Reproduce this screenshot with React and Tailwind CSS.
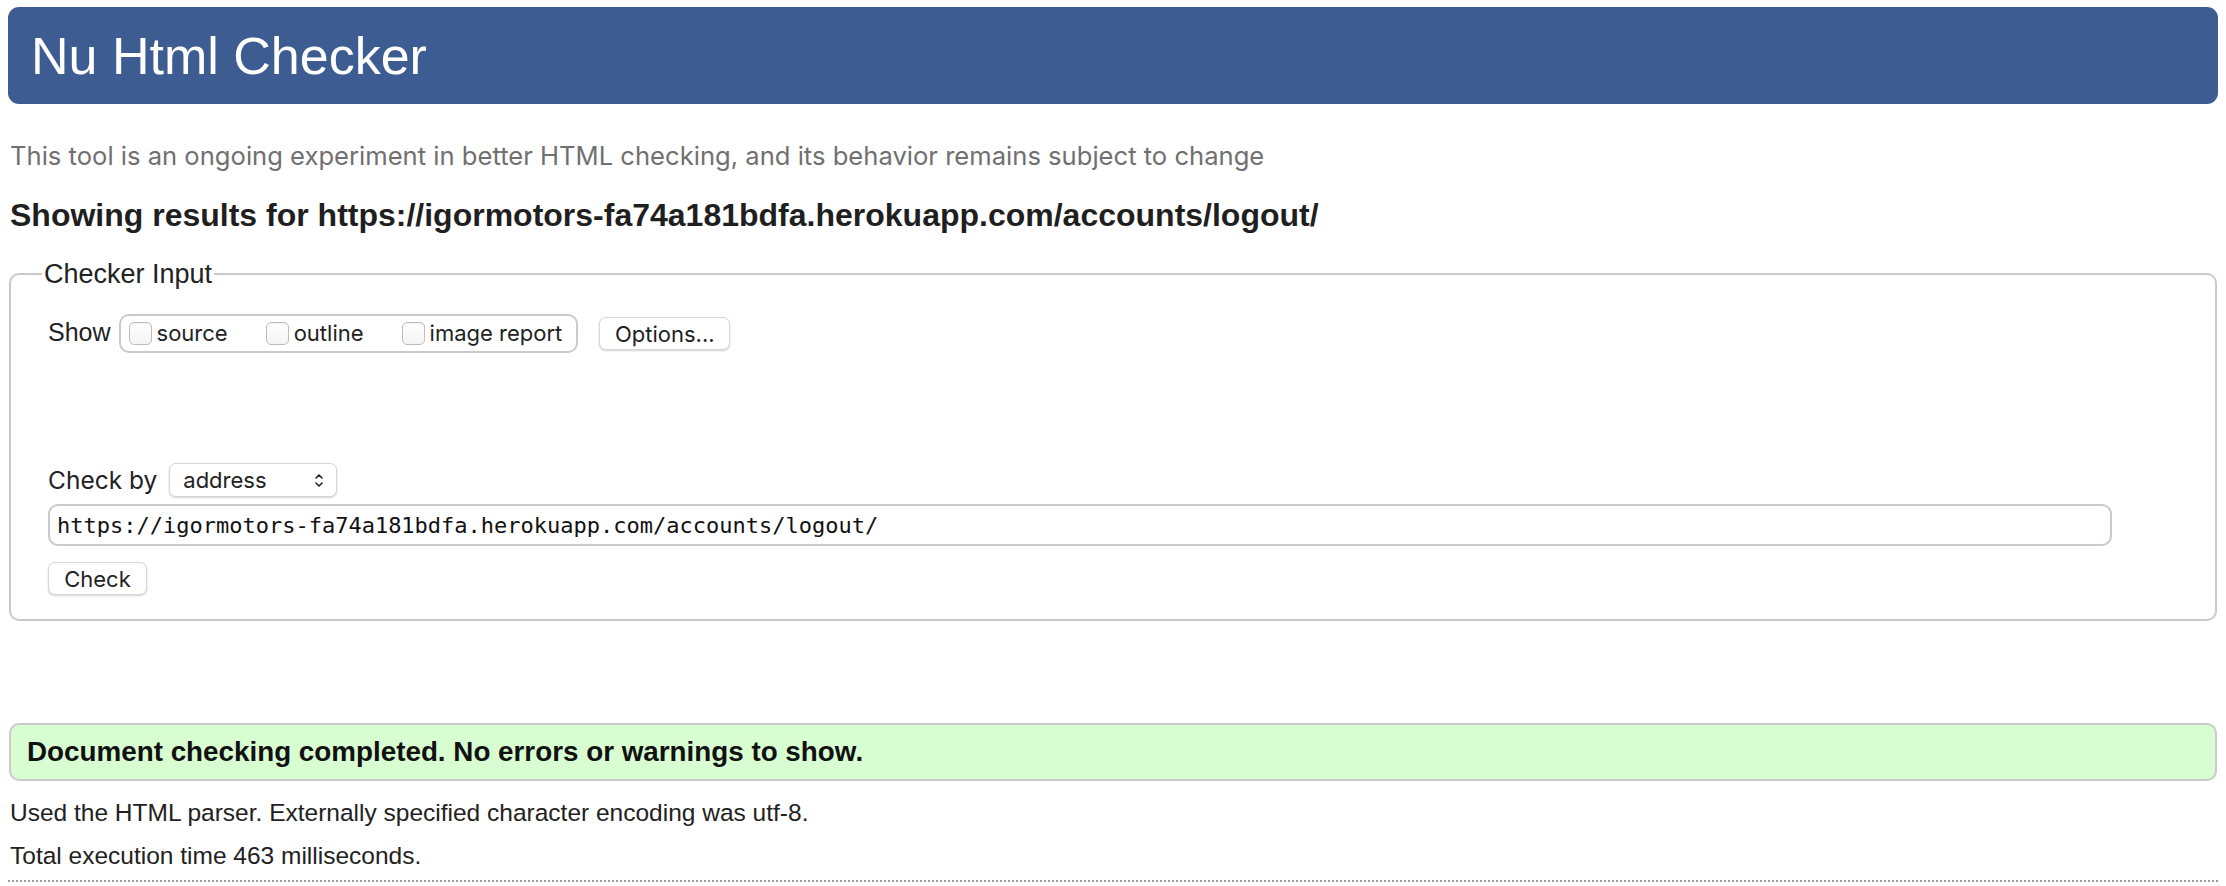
import React from "react";

const sans = "font-['Liberation_Sans',Arial,sans-serif]";
const ui = "font-['Inter','Noto_Sans',sans-serif]";
const mono = "font-['DejaVu_Sans_Mono','Liberation_Mono',monospace]";

function Box() {
  return (
    <span className="inline-block w-[23px] h-[23px] rounded-[5px] border border-[#bdbdbd] bg-gradient-to-b from-white to-[#f4f4f4] shadow-[inset_0_1px_1px_rgba(0,0,0,0.06)]" />
  );
}

function Chevrons() {
  return (
    <svg width="10" height="17" viewBox="0 0 10 17" fill="none" stroke="#222" strokeWidth="1.6" strokeLinecap="round" strokeLinejoin="round">
      <path d="M2 6 L5 3 L8 6" />
      <path d="M2 11 L5 14 L8 11" />
    </svg>
  );
}

export default function App() {
  return (
    <div className={`min-h-screen bg-white text-[#222] ${sans} flex flex-col`}>

      {/* HEADER */}
      <header className="mt-[7px] mx-[8px] h-[97px] rounded-[11px] bg-[#3d5c91] flex items-center pl-[23px]">
        <h1 className="text-[52px] leading-none text-white font-normal">Nu Html Checker</h1>
      </header>

      <p className={`mt-[36px] ml-[10px] h-[32px] leading-[32px] text-[25.6px] text-[#707070] ${ui}`}>
        This tool is an ongoing experiment in better HTML checking, and its behavior remains subject to change
      </p>

      <h2 className="mt-[23px] ml-[10px] h-[40px] leading-[40px] text-[32px] font-bold text-[#1f1f1f]">
        Showing results for https://igormotors-fa74a181bdfa.herokuapp.com/accounts/logout/
      </h2>

      {/* CHECKER INPUT */}
      <fieldset className="mt-[24px] mx-[9px] border-2 border-[#cacaca] rounded-[10px] pl-[31px] pr-[20px] pb-[24px]">
        <legend className="px-[2px] text-[27px] leading-[30px]">Checker Input</legend>

        <div className="pl-[6px]">
          <div className="mt-[25px] h-[38px] flex items-center">
            <span className="text-[25px]">Show</span>
            <div className={`ml-[8px] h-[39px] border-2 border-[#cacaca] rounded-[10px] pl-[8px] pr-[14px] flex items-center gap-[38px] text-[22px] ${ui}`}>
              <label className="flex items-center gap-[5px]"><Box />source</label>
              <label className="flex items-center gap-[5px]"><Box />outline</label>
              <label className="flex items-center gap-[5px]"><Box />image report</label>
            </div>
            <button className={`ml-[21px] w-[131px] h-[33px] rounded-[7px] border border-[#d6d6d6] bg-white shadow-[0_1px_2px_rgba(0,0,0,0.18)] text-[22px] ${ui}`}>
              Options...
            </button>
          </div>

          <div className={`mt-[111px] h-[34px] flex items-center ${ui}`}>
            <span className="text-[24.5px]">Check by</span>
            <div className="ml-[12px] w-[168px] h-[34px] rounded-[7px] border border-[#d6d6d6] bg-white shadow-[0_1px_2px_rgba(0,0,0,0.18)] flex items-center justify-between pl-[13px] pr-[12px]">
              <span className="text-[22px]">address</span>
              <Chevrons />
            </div>
          </div>

          <div className={`mt-[7px] w-[2064px] h-[42px] border-2 border-[#cacaca] rounded-[10px] flex items-center pl-[7px] text-[22px] text-[#111] ${mono}`}>
            https://igormotors-fa74a181bdfa.herokuapp.com/accounts/logout/
          </div>

          <button className={`mt-[16px] w-[99px] h-[33px] rounded-[7px] border border-[#d6d6d6] bg-white shadow-[0_1px_2px_rgba(0,0,0,0.18)] text-[22px] ${ui}`}>
            Check
          </button>
        </div>
      </fieldset>

      {/* RESULT */}
      <div className="mt-[102px] mx-[9px] h-[58px] border-2 border-[#cacaca] rounded-[10px] bg-[#d7fdd1] flex items-center pl-[16px]">
        <p className="text-[27.8px] font-bold text-[#111]">Document checking completed. No errors or warnings to show.</p>
      </div>

      <p className="mt-[16px] ml-[10px] h-[32px] leading-[32px] text-[24.5px]">
        Used the HTML parser. Externally specified character encoding was utf-8.
      </p>
      <p className="mt-[11px] ml-[10px] h-[32px] leading-[32px] text-[24.5px]">
        Total execution time 463 milliseconds.
      </p>
      <div className="mt-[8px] mx-[8px] border-t-2 border-dotted border-[#9a9a9a]" />
    </div>
  );
}
